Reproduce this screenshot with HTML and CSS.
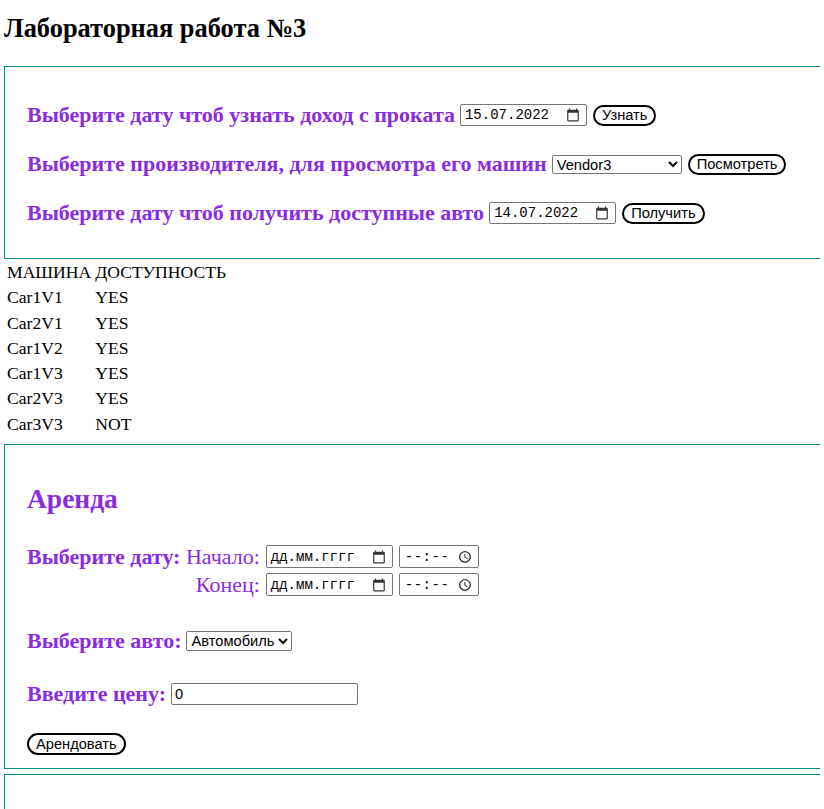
FILE: index.html
```html
<!DOCTYPE html>
<html lang="ru">
<head>
<meta charset="utf-8">
<title>Лабораторная работа №3</title>
<link rel="stylesheet" href="styles.css">
</head>
<body>
<h2 class="title">Лабораторная работа №3</h2>

<div class="panel panel-query">
  <div class="row">
    <span class="label">Выберите дату чтоб узнать доход с проката</span>
    <span class="field date"><span class="val">15.07.2022</span><svg class="ico cal" viewBox="0 0 24 24"><path d="M20 3h-1V1h-2v2H7V1H5v2H4c-1.1 0-2 .9-2 2v16c0 1.1.9 2 2 2h16c1.1 0 2-.9 2-2V5c0-1.1-.9-2-2-2zm0 18H4V8h16v13z"/></svg></span>
    <button class="btn">Узнать</button>
  </div>
  <div class="row">
    <span class="label">Выберите производителя, для просмотра его машин</span>
    <select class="sel sel-vendor"><option>Vendor3</option></select>
    <button class="btn">Посмотреть</button>
  </div>
  <div class="row">
    <span class="label">Выберите дату чтоб получить доступные авто</span>
    <span class="field date"><span class="val">14.07.2022</span><svg class="ico cal" viewBox="0 0 24 24"><path d="M20 3h-1V1h-2v2H7V1H5v2H4c-1.1 0-2 .9-2 2v16c0 1.1.9 2 2 2h16c1.1 0 2-.9 2-2V5c0-1.1-.9-2-2-2zm0 18H4V8h16v13z"/></svg></span>
    <button class="btn">Получить</button>
  </div>
</div>

<table class="cars">
  <tr><td>МАШИНА</td><td>ДОСТУПНОСТЬ</td></tr>
  <tr><td>Car1V1</td><td>YES</td></tr>
  <tr><td>Car2V1</td><td>YES</td></tr>
  <tr><td>Car1V2</td><td>YES</td></tr>
  <tr><td>Car1V3</td><td>YES</td></tr>
  <tr><td>Car2V3</td><td>YES</td></tr>
  <tr><td>Car3V3</td><td>NOT</td></tr>
</table>

<div class="panel panel-rent">
  <h2 class="rent-title">Аренда</h2>
  <div class="dates">
    <div class="dlabel"><b>Выберите дату:</b> Начало:</div>
    <span class="field date"><span class="val">дд.мм.гггг</span><svg class="ico cal" viewBox="0 0 24 24"><path d="M20 3h-1V1h-2v2H7V1H5v2H4c-1.1 0-2 .9-2 2v16c0 1.1.9 2 2 2h16c1.1 0 2-.9 2-2V5c0-1.1-.9-2-2-2zm0 18H4V8h16v13z"/></svg></span>
    <span class="field time"><span class="val">--:--</span><svg class="ico clock" viewBox="0 0 24 24"><path d="M11.99 2C6.47 2 2 6.48 2 12s4.47 10 9.990 10C17.52 22 22 17.52 22 12S17.52 2 11.99 2zM12 20c-4.42 0-8-3.58-8-8s3.58-8 8-8 8 3.58 8 8-3.58 8-8 8zm.5-13H11v6l5.25 3.15.75-1.23-4.5-2.67z"/></svg></span>
    <div class="dlabel">Конец:</div>
    <span class="field date"><span class="val">дд.мм.гггг</span><svg class="ico cal" viewBox="0 0 24 24"><path d="M20 3h-1V1h-2v2H7V1H5v2H4c-1.1 0-2 .9-2 2v16c0 1.1.9 2 2 2h16c1.1 0 2-.9 2-2V5c0-1.1-.9-2-2-2zm0 18H4V8h16v13z"/></svg></span>
    <span class="field time"><span class="val">--:--</span><svg class="ico clock" viewBox="0 0 24 24"><path d="M11.99 2C6.47 2 2 6.48 2 12s4.47 10 9.99 10C17.52 22 22 17.52 22 12S17.52 2 11.99 2zM12 20c-4.42 0-8-3.58-8-8s3.58-8 8-8 8 3.58 8 8-3.58 8-8 8zm.5-13H11v6l5.25 3.15.75-1.23-4.5-2.67z"/></svg></span>
  </div>
  <div class="row row-car">
    <span class="label">Выберите авто:</span>
    <select class="sel sel-car"><option>Автомобиль</option></select>
  </div>
  <div class="row row-price">
    <span class="label">Введите цену:</span>
    <input class="text-input" type="text" value="0">
  </div>
  <button class="btn btn-rent">Арендовать</button>
</div>

<div class="panel panel-empty"></div>
</body>
</html>
```

FILE: styles.css
```css
html {
  overflow: hidden;
}
body {
  margin: 0 4px;
  font-family: "Liberation Serif", "Times New Roman", serif;
  font-size: 17.6px;
  color: #000;
  background: #fff;
}
.title {
  margin: 0;
  padding-top: 13px;
  font-size: 26.4px;
  font-weight: bold;
  line-height: 30px;
  height: 53px;
}
.panel {
  border: 1px solid #008b8b;
  margin-right: -60px;
  padding: 0 22px;
}
.panel-query {
  padding-top: 35px;
  padding-bottom: 32px;
  display: flex;
  flex-direction: column;
  gap: 23px;
}
.row {
  display: flex;
  align-items: center;
  gap: 5px;
  height: 26px;
}
.label {
  color: #8a2be2;
  font-weight: bold;
  font-size: 22px;
}
.field {
  box-sizing: border-box;
  display: inline-flex;
  align-items: center;
  justify-content: space-between;
  border: 1px solid #767676;
  border-radius: 2px;
  background: #fff;
  height: 22px;
  padding: 0 6px 0 4px;
  font-family: "Liberation Mono", "DejaVu Sans Mono", monospace;
  font-size: 14px;
  font-weight: normal;
  color: #000;
}
.field.date {
  width: 127px;
}
.field.time {
  width: 80px;
  padding-left: 5px;
}
.field.time .val {
  letter-spacing: 0.5px;
}
.dates .field {
  height: 23px;
}
.ico {
  width: 14px;
  height: 14px;
  fill: #111;
}
.ico.cal {
  fill: #333;
}
.btn {
  font-family: "Liberation Sans", Arial, sans-serif;
  font-size: 14.67px;
  background: #fff;
  color: #000;
  border: 2px solid #000;
  border-radius: 11px;
  padding: 0 7px;
  height: 21px;
  line-height: 17px;
  margin-left: 1px;
}
.sel {
  font-family: "Liberation Sans", Arial, sans-serif;
  font-size: 14.67px;
  height: 19px;
  border: 1px solid #767676;
  border-radius: 2px;
  background: #fff;
  color: #000;
  padding: 0;
}
.sel-vendor {
  width: 130px;
}
.sel-car {
  width: 106px;
  height: 20px;
}
.cars {
  border-spacing: 2px;
  margin: 0;
}
.cars td {
  padding: 2px 1px;
  line-height: 19.3px;
}
.panel-rent {
  margin-top: 6px;
  padding-top: 38px;
  padding-bottom: 13px;
}
.rent-title {
  margin: 0 0 30px;
  color: #8a2be2;
  font-size: 27.5px;
  line-height: 32px;
}
.dates {
  display: grid;
  grid-template-columns: auto 127px 80px;
  column-gap: 6px;
  row-gap: 5px;
  align-items: center;
  justify-content: start;
  color: #8a2be2;
  font-size: 22px;
}
.dlabel {
  text-align: right;
  line-height: 23px;
}
.row-car {
  margin-top: 32px;
}
.row-price {
  margin-top: 27px;
}
.text-input {
  box-sizing: border-box;
  width: 187px;
  height: 22px;
  border: 1px solid #767676;
  border-radius: 2px;
  padding: 1px 3px;
  font-family: "Liberation Sans", Arial, sans-serif;
  font-size: 14.67px;
}
.btn-rent {
  margin: 26px 0 0;
  display: block;
  height: 22px;
}
.panel-empty {
  margin-top: 5px;
  height: 60px;
}
```
